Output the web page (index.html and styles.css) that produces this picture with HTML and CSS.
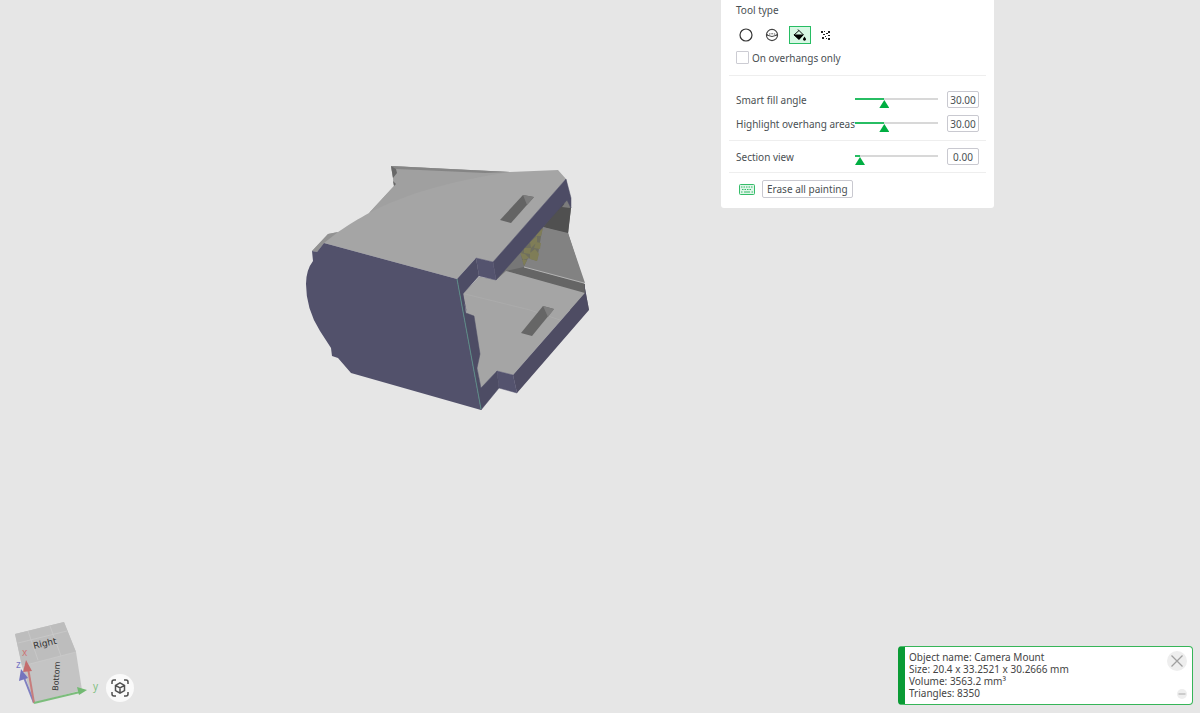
FILE: index.html
```html
<!DOCTYPE html>
<html lang="en">
<head>
<meta charset="utf-8">
<title>Camera Mount - Painting</title>
<link rel="stylesheet" href="styles.css">
</head>
<body>
<main class="viewport">
  <svg class="model" viewBox="300 160 296 256" role="img" aria-label="Camera Mount model">
    <path fill="#777" d="M566 179L571 208L568 233L584 283L589 310L505 310L463 294L479 277L496 280Z"/>
    <path fill="#505050" d="M543 227L563 203L571 208L568 234Z"/>
    <path fill="#7c7c7c" d="M562 207L568 199L570 208Z"/>
    <path fill="#828282" d="M543 227L568 233L585 283L524 267L530 254L537 257Z"/>
    <path fill="#6e6e5e" d="M520 253L542 229L537 261L528 258L524 266L521 258Z"/>
    <path fill="#7f7d57" d="M530 242L537 236L537 242L531 248ZM538 231L543 228L541 236L536 236ZM524 248L531 248L530 254L524 253ZM536 242L541 243L540 249L534 248ZM530 253L535 249L539 254L537 261L530 259ZM520 253L525 254L529 258L523 260ZM522 260L527 260L524 266Z"/>
    <path fill="#656565" d="M506 271L513 264L585 284L585 294Z"/>
    <path fill="#777" d="M506 271L520 252L524 267Z"/>
    <path stroke="#b4b4b4" stroke-width="1" fill="none" d="M524 267L584 283"/>
    <path fill="#a5a5a5" d="M479 277L496 280L506 271L585 293L513 375L497 371L481 389L463 294Z"/>
    <path stroke="#ababab" stroke-width="1" fill="none" d="M465 294L530 310L560 320"/>
    <path fill="#666" d="M543 306L554 309L532 336L521 333Z"/>
    <path fill="#7e7e7e" d="M543 306L554 309L548 317Z"/>
    <path fill="#4e4c63" d="M584 283L589 310L517 393L513 375L585 293Z"/>
    <path fill="#54536e" stroke="#54536e" stroke-width=".5" d="M513 375L517 393L499 388L497 371Z"/>
    <path fill="#4d4c64" stroke="#4d4c64" stroke-width=".5" d="M497 371L499 388L481 410L457 279L463 294L466 313L474 316L480 354L477 368L481 388Z"/>
    <path fill="#a5a5a5" d="M391 166L445 169L510 172L558 170L566 179L493 262L476 258L457 279L324 243L317 252L312 251L328 234L338 232C350 224 358 219 369 213L394 186L393 178Z"/>
    <path fill="#a0a0a0" d="M391 166L510 172C450 181 408 193 369 213L394 186L393 178Z"/>
    <path fill="#858585" d="M391 166L510 172L485 173L420 170L395 169Z"/>
    <path fill="#686868" d="M391 166L396 169L397 173L393 178ZM393 181L396 184L394 186Z"/>
    <path fill="#929292" d="M312 251L328 234L338 232L324 243L317 252Z"/>
    <path fill="#646464" d="M523 195L534 197L511 223L500 220Z"/>
    <path fill="#7c7c7c" d="M523 195L534 197L527 205Z"/>
    <path fill="#4d4c65" stroke="#4d4c65" stroke-width=".5" d="M566 179L571 198L571 208L567 200L496 280L493 262Z"/>
    <path fill="#54536e" stroke="#54536e" stroke-width=".5" d="M476 258L493 262L496 280L479 276Z"/>
    <path fill="#4d4c65" d="M457 279L476 258L479 276L463 294L467 313Z"/>
    <path fill="#52516b" d="M324 243L457 279L481 410L351 373L338 358L332 356L331 348L320 331Q306 309 306 284Q306 270 313 261L312 251L317 252Z"/>
    <path stroke="#5d8c88" stroke-width="1" fill="none" d="M457 279L481 409"/>
  </svg>

  <section class="tools" aria-label="Painting tools">
    <div class="group">
      <h2 class="label">Tool type</h2>
      <div class="brushes">
        <button class="brush" aria-label="Circle"><svg viewBox="0 0 20 16"><circle cx="10" cy="8" r="6" fill="none" stroke="#333" stroke-width="1.2"/></svg></button>
        <button class="brush" aria-label="Sphere"><svg viewBox="0 0 20 16" fill="none" stroke="#444"><circle cx="10" cy="8" r="5.600" stroke-width="1.1"/><path d="M4.500 8Q10 11 15.500 8"/><path stroke-dasharray="1.500 1" d="M4.500 8Q10 5.500 15.500 8"/></svg></button>
        <button class="brush selected" aria-label="Fill"><svg viewBox="0 0 20 16"><path fill="none" stroke="#111" d="M8 2.500L13 7.500L9 12L4 8L9 3.500"/><path d="M3.500 7.500H14L9 13ZM14.500 9.500Q16.500 12 15.800 13Q14.500 14.500 13.200 13Q12.500 12 14.500 9.500Z"/></svg></button>
        <button class="brush" aria-label="Gap fill"><svg viewBox="0 0 20 16" fill="#222"><path d="M5 4h2v2h-2zM8 4h1v1h-1zM12 4h2v2h-2zM10 6h2v1h-2zM7 7h2v1h-2zM12 8h2v1h-2zM6 10h2v2h-2zM9 9h1v1h-1zM10 11h1v1h-1zM12 11h2v2h-2z"/></svg></button>
      </div>
      <label class="check"><input type="checkbox">On overhangs only</label>
    </div>
    <div class="group sliders">
      <div class="row"><label for="angle">Smart fill angle</label><input class="slider" id="angle" type="range" min="0" max="90" value="30"><input class="value" aria-label="Smart fill angle value" value="30.00"></div>
      <div class="row"><label for="overhang">Highlight overhang areas</label><input class="slider" id="overhang" type="range" min="0" max="90" value="30"><input class="value" aria-label="Overhang value" value="30.00"></div>
    </div>
    <div class="group section">
      <div class="row"><label for="section">Section view</label><input class="slider zero" id="section" type="range" min="0" max="1" value="0"><input class="value" aria-label="Section view value" value="0.00"></div>
    </div>
    <div class="group actions">
      <button class="keys" aria-label="Keyboard shortcuts"><svg viewBox="0 0 16 11" fill="none" stroke="#35bd69"><rect x=".5" y=".5" width="15" height="10" rx="1" fill="#dff5e8"/><path stroke-dasharray="1.500 1" d="M2 3H14M3 5.500H13"/><path d="M2 8H3.500M5 8H11M12.500 8H14"/></svg></button>
      <button class="erase">Erase all painting</button>
    </div>
  </section>

  <div class="navigator">
    <svg class="cube" viewBox="8 618 96 90" role="img" aria-label="View orientation">
      <path fill="#c4c4c4" d="M15 634L64 622L76 652L82 690L34 703L22 666Z"/>
      <path fill="#bdbdbd" d="M15 634L64 622L76 652L22 666Z"/>
      <path fill="none" stroke="#ccc" stroke-width=".7" d="M22 666L76 652M18 643L67 631M28 631L38 660M50 626L61 656"/>
      <text class="face" transform="translate(34 649) rotate(-13)">Right</text>
      <text class="face bottom" transform="translate(58 691) rotate(-86)">Bottom</text>
      <path stroke="#8080c0" stroke-width="2" d="M34 703L23 675"/><path fill="#7474bd" d="M21 669L28 678L19 681Z"/>
      <path stroke="#c77d7d" stroke-width="2" d="M34 703L28 668"/><path fill="#c46d6d" d="M26 660L32 671L23 672Z"/>
      <path stroke="#7cbd7c" stroke-width="2" d="M34 703L80 692"/><path fill="#72b972" d="M87 690L79 695L77 687Z"/>
      <text class="axis" x="22" y="656" fill="#cc7777">x</text>
      <text class="axis" x="16" y="668" fill="#7777c4">z</text>
      <text class="axis" x="93" y="690" fill="#82bf82">y</text>
    </svg>
    <button class="fit" aria-label="Fit view"><svg viewBox="0 0 18 18" fill="none" stroke="#505050" stroke-width="1.500"><path d="M5 1H3Q1 1 1 3V5M13 1H15Q17 1 17 3V5M1 13V15Q1 17 3 17H5M17 13V15Q17 17 15 17H13M9 3.800L13.500 6.400V11.600L9 14.200L4.500 11.600V6.400ZM4.500 6.400L9 9L13.500 6.400M9 9V14"/></svg></button>
  </div>

  <aside class="info">
    <p class="details">Object name: Camera Mount<br>Size: 20.4 x 33.2521 x 30.2666 mm<br>Volume: 3563.2 mm³<br>Triangles: 8350</p>
    <div class="controls">
      <button class="close" aria-label="Close"><svg viewBox="0 0 20 20"><path stroke="#a0a0a0" stroke-width="1.300" d="M4.500 4.500L15.500 15.500M15.500 4.500L4.500 15.500"/></svg></button>
      <button class="minimize" aria-label="Minimize"><svg viewBox="0 0 10 10"><path stroke="#ccc" stroke-width="2" d="M1.500 5H8.500"/></svg></button>
    </div>
  </aside>
</main>
</body>
</html>
```
FILE: styles.css
```css
* { box-sizing: border-box; }
body { margin: 0; font: 10px/12px "Noto Sans", "Open Sans", sans-serif; color: #4a5053; }
button, input { font: inherit; color: inherit; margin: 0; padding: 0; }
button { border: 0; background: none; }
svg { display: block; }
.viewport { position: relative; min-height: 100vh; background: #e6e6e6; overflow: hidden; }
.model { position: absolute; left: 300px; top: 160px; width: 296px; }

.tools { position: absolute; left: 721px; top: 0; width: 273px; padding: 0 8px; background: #fff; border-radius: 0 0 3px 3px; }
.group { padding: 4px 7px; border-bottom: 1px solid #eee; }
.group:last-child { border: 0; }
.label { margin: 0; font: inherit; }
.brushes { display: flex; gap: 4px; margin: 10px 0 7px -1px; }
.brush { width: 22px; height: 18px; border: 1px solid transparent; }
.brush svg { width: 20px; height: 16px; }
.brush.selected { margin-left: 2px; background: #d8f7e4; border-color: #27bd63; }
.check { display: flex; align-items: center; gap: 3px; padding-bottom: 7px; }
.check input { appearance: none; width: 13px; height: 13px; border: 1px solid #ccccd3; border-radius: 1px; background: #fff; }
.sliders { display: grid; gap: 7px; padding: 15px 7px 8px; }
.section { padding: 7px; }
.row { display: grid; grid-template-columns: 119px 83px 41px; align-items: center; white-space: nowrap; }
.slider { appearance: none; width: 100%; height: 17px; background: linear-gradient(90deg, #27bd63 35%, #d8d8d8 35%) 0 7px / 100% 2px no-repeat; }
.slider.zero { background-image: linear-gradient(90deg, #27bd63 6%, #d8d8d8 6%); }
.slider::-webkit-slider-runnable-track { height: 17px; }
.slider::-webkit-slider-thumb { appearance: none; width: 10px; height: 8px; margin-top: 9px; background: #00ae42; clip-path: polygon(50% 0, 100% 100%, 0 100%); }
.value { width: 32px; height: 17px; justify-self: end; border: 1px solid #c9c9d0; border-radius: 2px; text-align: center; }
.actions { display: flex; align-items: center; gap: 7px; padding: 7px 10px 10px; }
.keys svg { width: 16px; height: 11px; }
.erase { height: 18px; padding: 0 4px; border: 1px solid #c9c9d0; border-radius: 2px; }

.navigator { position: absolute; left: 8px; bottom: 5px; display: flex; align-items: flex-end; gap: 2px; }
.cube { width: 96px; height: 90px; }
.face { font: 9px "DejaVu Sans", sans-serif; fill: #333; }
.face.bottom { font-size: 8px; }
.axis { font: 10px "Noto Sans", sans-serif; }
.fit { display: grid; place-items: center; width: 28px; height: 28px; margin-bottom: 6px; border-radius: 50%; background: #fafafa; }
.fit svg { width: 18px; height: 18px; }

.info { position: absolute; right: 7px; bottom: 8px; width: 295px; display: flex; justify-content: space-between; padding: 4px 5px 5px 4px; border: 1px solid #36b558; border-left: 7px solid #0a9b35; border-radius: 4px; background: #fff; color: #444; }
.details { margin: 0; }
.controls { display: flex; flex-direction: column; align-items: center; justify-content: space-between; }
.close { width: 20px; height: 20px; border-radius: 50%; background: #eee; }
.minimize { width: 10px; height: 10px; align-self: flex-end; border-radius: 50%; background: #eee; }
```
